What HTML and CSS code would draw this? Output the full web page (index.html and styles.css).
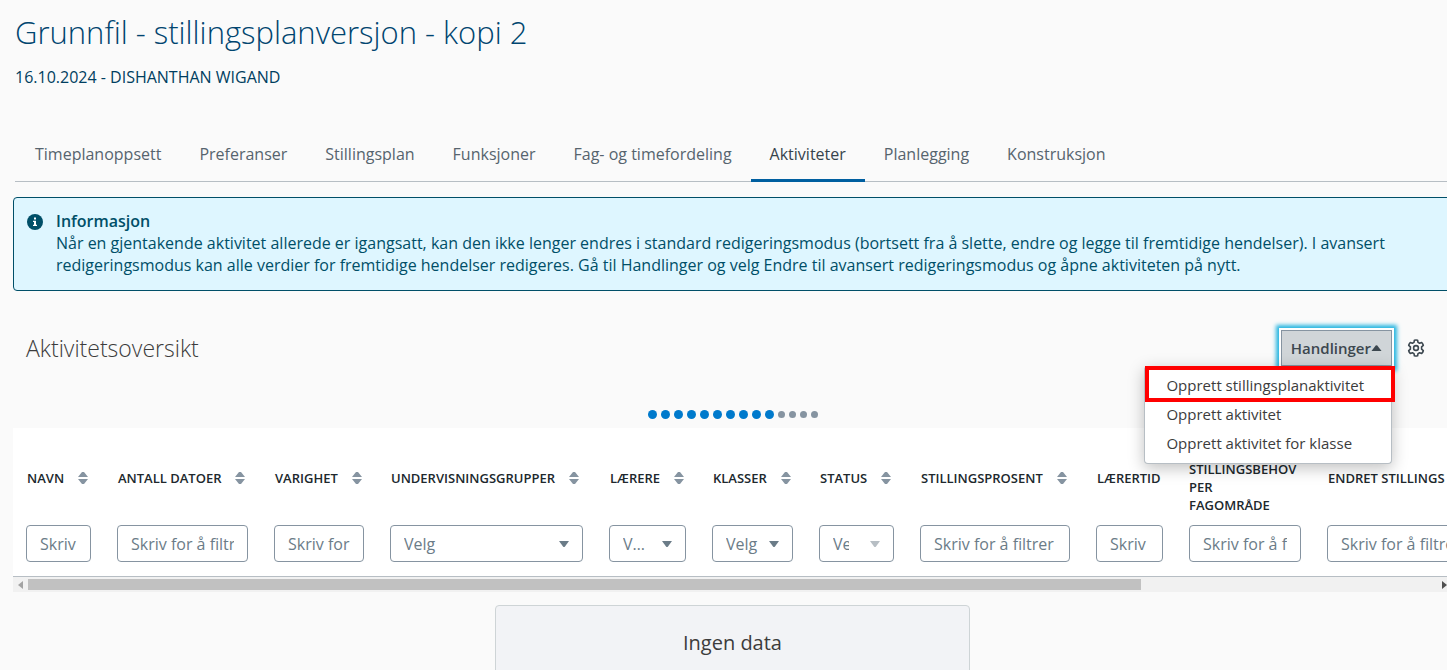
FILE: index.html
```html
<!DOCTYPE html>
<html lang="no">
<head>
    <meta charset="UTF-8">
    <meta name="viewport" content="width=device-width, initial-scale=1.0">
    <title>Grunnfil - stillingsplanversjon - kopi 2</title>
    <link rel="stylesheet" href="styles.css">
</head>
<body>
    <!-- Shared icons -->
    <svg class="icon-defs" aria-hidden="true">
        <symbol id="sort" viewBox="0 0 10 12">
            <path d="M0 5 4 0h2l4 5zM0 7h10l-4 5H4z" fill="#8694a1"/>
        </symbol>
        <symbol id="arrow" viewBox="0 0 10 6">
            <path d="M0 0h10L6 5.4q-1 1-2 0z" fill="currentColor"/>
        </symbol>
    </svg>

    <div class="page">
        <header class="page-header">
            <h1>Grunnfil - stillingsplanversjon - kopi 2</h1>
            <p>16.10.2024 - DISHANTHAN WIGAND</p>
        </header>

        <nav class="tabs">
            <a href="#">Timeplanoppsett</a>
            <a href="#">Preferanser</a>
            <a href="#">Stillingsplan</a>
            <a href="#">Funksjoner</a>
            <a href="#">Fag- og timefordeling</a>
            <a href="#" class="active" aria-current="page">Aktiviteter</a>
            <a href="#">Planlegging</a>
            <a href="#">Konstruksjon</a>
        </nav>

        <section class="info">
            <svg class="info-icon" viewBox="0 0 16 16" aria-hidden="true">
                <circle cx="8" cy="8" r="8" fill="#004f68"/>
                <path d="M7 3.5h2v2H7zM6 6.7h3v4h1V12H6v-1.3h1V8H6z" fill="#fff"/>
            </svg>
            <div>
                <h2>Informasjon</h2>
                <p>Når en gjentakende aktivitet allerede er igangsatt, kan den ikke lenger endres i standard redigeringsmodus (bortsett fra å slette, endre og legge til fremtidige hendelser). I avansert redigeringsmodus kan alle verdier for fremtidige hendelser redigeres. Gå til Handlinger og velg Endre til avansert redigeringsmodus og åpne aktiviteten på nytt.</p>
            </div>
        </section>

        <section class="toolbar">
            <h2>Aktivitetsoversikt</h2>
            <div class="dropdown">
                <button type="button" class="dropdown-button" aria-expanded="true">Handlinger<svg viewBox="0 0 10 6" aria-hidden="true"><path d="M0 6h10L5.8.6q-.8-.8-1.6 0z" fill="currentColor"/></svg></button>
                <div class="dropdown-menu">
                    <button type="button" class="marked">Opprett stillingsplanaktivitet</button>
                    <button type="button">Opprett aktivitet</button>
                    <button type="button">Opprett aktivitet for klasse</button>
                </div>
            </div>
            <button type="button" class="settings" aria-label="Innstillinger">
                <svg viewBox="0 0 18 18" fill="none" stroke="#3c474f" stroke-width="1.6" stroke-linejoin="round" aria-hidden="true">
                    <path d="M7.4 1.2Q9 .8 10.6 1.2L11 3.4 12.600 4.300 14.700 3.500Q15.900 4.700 16.300 6.300L14.600 7.800V10.200L16.300 11.700Q15.900 13.300 14.700 14.500L12.600 13.700 11 14.600 10.600 16.800Q9 17.200 7.400 16.800L7 14.600 5.400 13.700 3.300 14.500Q2.100 13.300 1.700 11.700L3.400 10.200V7.800L1.700 6.300Q2.100 4.700 3.300 3.500L5.400 4.300 7 3.400z"/>
                    <circle cx="9" cy="9" r="2.4"/>
                </svg>
            </button>
        </section>

        <div class="loader">
            <i class="on"></i><i class="on"></i><i class="on"></i><i class="on"></i><i class="on"></i>
            <i class="on"></i><i class="on"></i><i class="on"></i><i class="on"></i><i class="on"></i>
            <i></i><i></i><i></i><i></i>
        </div>

        <div class="table-wrapper">
            <table>
                <colgroup>
                    <col class="w-navn"><col class="w-datoer"><col class="w-varighet"><col class="w-grupper">
                    <col class="w-laerere"><col class="w-klasser"><col class="w-status"><col class="w-prosent">
                    <col class="w-tid"><col class="w-behov"><col class="w-endret">
                </colgroup>
                <thead>
                    <tr>
                        <th scope="col"><div>NAVN <svg><use href="#sort"/></svg></div></th>
                        <th scope="col"><div>ANTALL DATOER <svg><use href="#sort"/></svg></div></th>
                        <th scope="col"><div>VARIGHET <svg><use href="#sort"/></svg></div></th>
                        <th scope="col"><div>UNDERVISNINGSGRUPPER <svg><use href="#sort"/></svg></div></th>
                        <th scope="col"><div>LÆRERE <svg><use href="#sort"/></svg></div></th>
                        <th scope="col"><div>KLASSER <svg><use href="#sort"/></svg></div></th>
                        <th scope="col"><div>STATUS <svg><use href="#sort"/></svg></div></th>
                        <th scope="col"><div>STILLINGSPROSENT <svg><use href="#sort"/></svg></div></th>
                        <th scope="col"><div>LÆRERTID</div></th>
                        <th scope="col" class="wrap">STILLINGSBEHOV<br>PER<br>FAGOMRÅDE</th>
                        <th scope="col"><div>ENDRET STILLINGS</div></th>
                    </tr>
                </thead>
                <tbody>
                    <tr>
                        <td><input type="text" placeholder="Skriv for å filtrer" aria-label="Navn"></td>
                        <td><input type="text" placeholder="Skriv for å filtrer" aria-label="Antall datoer"></td>
                        <td><input type="text" placeholder="Skriv for å filtrer" aria-label="Varighet"></td>
                        <td><div class="select"><select aria-label="Undervisningsgrupper"><option>Velg</option></select><svg><use href="#arrow"/></svg></div></td>
                        <td><div class="select"><select aria-label="Lærere"><option>Velg</option></select><svg><use href="#arrow"/></svg></div></td>
                        <td><div class="select"><select aria-label="Klasser"><option>Velg</option></select><svg><use href="#arrow"/></svg></div></td>
                        <td><div class="select light"><select aria-label="Status"><option>Velg</option></select><svg><use href="#arrow"/></svg></div></td>
                        <td><input type="text" placeholder="Skriv for å filtrer" aria-label="Stillingsprosent"></td>
                        <td><input type="text" placeholder="Skriv for å filtrer" aria-label="Lærertid"></td>
                        <td><input type="text" placeholder="Skriv for å filtrer" aria-label="Stillingsbehov per fagområde"></td>
                        <td><input type="text" placeholder="Skriv for å filtrer" aria-label="Endret stillings"></td>
                    </tr>
                </tbody>
            </table>
        </div>
        <div class="scrollbar">
            <span class="scroll-left"></span>
            <div class="track"><div class="thumb"></div></div>
            <span class="scroll-right"></span>
        </div>

        <div class="empty">Ingen data</div>
    </div>
</body>
</html>
```
FILE: styles.css
```css
*, *::after {
    box-sizing: border-box;
}

body {
    margin: 0;
    background-color: #fafafa;
    color: #3c3c3c;
    font-family: "Open Sans", sans-serif;
    font-size: 16px;
    line-height: 22px;
    overflow: hidden;
}

h1, h2, p {
    margin: 0;
}

button, input, select {
    font: inherit;
    color: inherit;
}

.icon-defs {
    display: none;
}

/* The content runs slightly past the right edge of the window */
.page {
    margin-left: 13px;
    margin-right: -5px;
}

.page-header {
    padding: 12px 2px 0;
    color: #003e60;
}

.page-header h1 {
    color: #00456f;
    font-size: 31px;
    font-weight: 300;
    line-height: 40px;
}

.page-header p {
    margin-top: 14px;
}

/* Tabs */
.tabs {
    display: flex;
    margin: 39px 0 0 2px;
    padding-left: 1px;
    border-bottom: 1px solid #b7bec4;
}

.tabs a {
    padding: 16px 19px 14px;
    margin-bottom: -1px;
    color: #56646e;
    text-decoration: none;
    border-bottom: 3px solid transparent;
}

.tabs a.active {
    color: #36434c;
    border-bottom-color: #005fa0;
}

/* Info message */
.info {
    display: flex;
    gap: 13px;
    margin-top: 15px;
    padding: 12px 60px 14px 13px;
    background-color: #def6ff;
    border: 1px solid #004f68;
    border-radius: 4px;
    color: #004f68;
}

.info-icon {
    flex: none;
    width: 16px;
    height: 16px;
    margin-top: 4px;
}

.info h2 {
    font-size: 16px;
    font-weight: 600;
    line-height: 22px;
}

/* Title and actions */
.toolbar {
    display: flex;
    align-items: center;
    margin-top: 39px;
    padding: 0 27px 0 13px;
}

.toolbar h2 {
    flex: 1;
    font-size: 23px;
    font-weight: 300;
    line-height: 30px;
}

.dropdown {
    position: relative;
    font-size: 15px;
}

.dropdown-button {
    display: flex;
    align-items: center;
    height: 36px;
    padding: 0 9px;
    background-color: #d0d5d8;
    border: 1px solid #8694a1;
    color: #3c474f;
    font-weight: 600;
    box-shadow: 0 0 0 2px #fff, 0 0 4px 5px #27b5e0;
}

.dropdown-button svg {
    width: 11px;
    height: 6px;
}

.dropdown-menu {
    position: absolute;
    z-index: 1;
    top: 36px;
    right: 0;
    padding: 5px 0;
    background-color: #fff;
    border: 1px solid #b7bec4;
    border-top: none;
    border-radius: 4px;
    box-shadow: 0 4px 16px rgba(0, 0, 0, 0.25);
}

.dropdown-menu button {
    display: block;
    width: 100%;
    padding: 3px 27px 4px 21px;
    background: none;
    border: none;
    text-align: left;
    white-space: nowrap;
}

/* Red frame around the highlighted action */
.marked::after {
    content: "";
    position: absolute;
    top: 0;
    left: 0;
    right: -4px;
    height: 36px;
    border: 4px solid #f00;
}

.settings {
    display: flex;
    margin-left: 15px;
    padding: 0;
    background: none;
    border: none;
}

.settings svg {
    width: 18px;
    height: 18px;
}

/* Progress dots */
.loader {
    display: flex;
    justify-content: center;
    align-items: center;
    gap: 4px;
    height: 27px;
    margin-top: 35px;
}

.loader i {
    width: 7px;
    height: 7px;
    border-radius: 50%;
    background-color: #8694a1;
}

.loader .on {
    width: 9px;
    height: 9px;
    background-color: #007acc;
}

/* Activity table */
.table-wrapper {
    overflow: hidden;
    background-color: #fff;
    border-bottom: 1px solid #b7bec4;
}

table {
    width: 1800px;
    table-layout: fixed;
    border-collapse: collapse;
}

.w-navn { width: 91px; }
.w-datoer { width: 157px; }
.w-varighet { width: 116px; }
.w-grupper { width: 219px; }
.w-laerere { width: 103px; }
.w-klasser { width: 107px; }
.w-status { width: 101px; }
.w-prosent { width: 176px; }
.w-tid { width: 93px; }
.w-behov { width: 138px; }

th {
    padding: 32px 0 0 14px;
    color: #20282d;
    font-size: 13px;
    font-weight: 600;
    line-height: 18px;
    text-align: left;
    vertical-align: top;
    white-space: nowrap;
}

th div {
    display: flex;
    align-items: center;
    gap: 14px;
    min-height: 36px;
}

th.wrap {
    padding-left: 13px;
}

th svg {
    flex: none;
    width: 10px;
    height: 12px;
}

td {
    padding: 11px 13px 14px;
}

td input, td select {
    display: block;
    width: 100%;
    height: 37px;
    padding: 0 13px;
    background-color: #fff;
    border: 1px solid #8694a1;
    border-radius: 4px;
    color: #6b7c88;
    font-weight: 500;
}

td input::placeholder {
    color: #6b7c88;
    opacity: 1;
}

.select {
    display: flex;
    position: relative;
    color: #6b7c88;
}

.select select {
    appearance: none;
    padding-right: 34px;
    text-overflow: ellipsis;
}

.select svg {
    position: absolute;
    top: 16px;
    right: 14px;
    width: 10px;
    height: 6px;
    pointer-events: none;
}

.select.light select {
    padding-right: 44px;
    text-overflow: clip;
}

.select.light svg {
    color: #b7bec4;
}

/* Horizontal scrollbar */
.scrollbar {
    display: flex;
    align-items: center;
    justify-content: space-between;
    height: 15px;
    padding: 0 5px;
    background-color: #f1f1f1;
}

.track {
    flex: 1;
    margin: 0 5px;
}

.thumb {
    width: 79%;
    height: 11px;
    background-color: #c1c1c1;
}

.scroll-left, .scroll-right {
    border: 4px solid transparent;
}

.scroll-left {
    border-left: none;
    border-right: 5px solid #a3a3a3;
}

.scroll-right {
    border-right: none;
    border-left: 5px solid #505050;
}

/* Empty state */
.empty {
    width: 33%;
    margin: 13px auto 0;
    padding: 23px;
    background-color: #f2f3f6;
    border: 1px solid #ced4d6;
    border-radius: 4px;
    font-size: 20px;
    line-height: 28px;
    text-align: center;
}
```
